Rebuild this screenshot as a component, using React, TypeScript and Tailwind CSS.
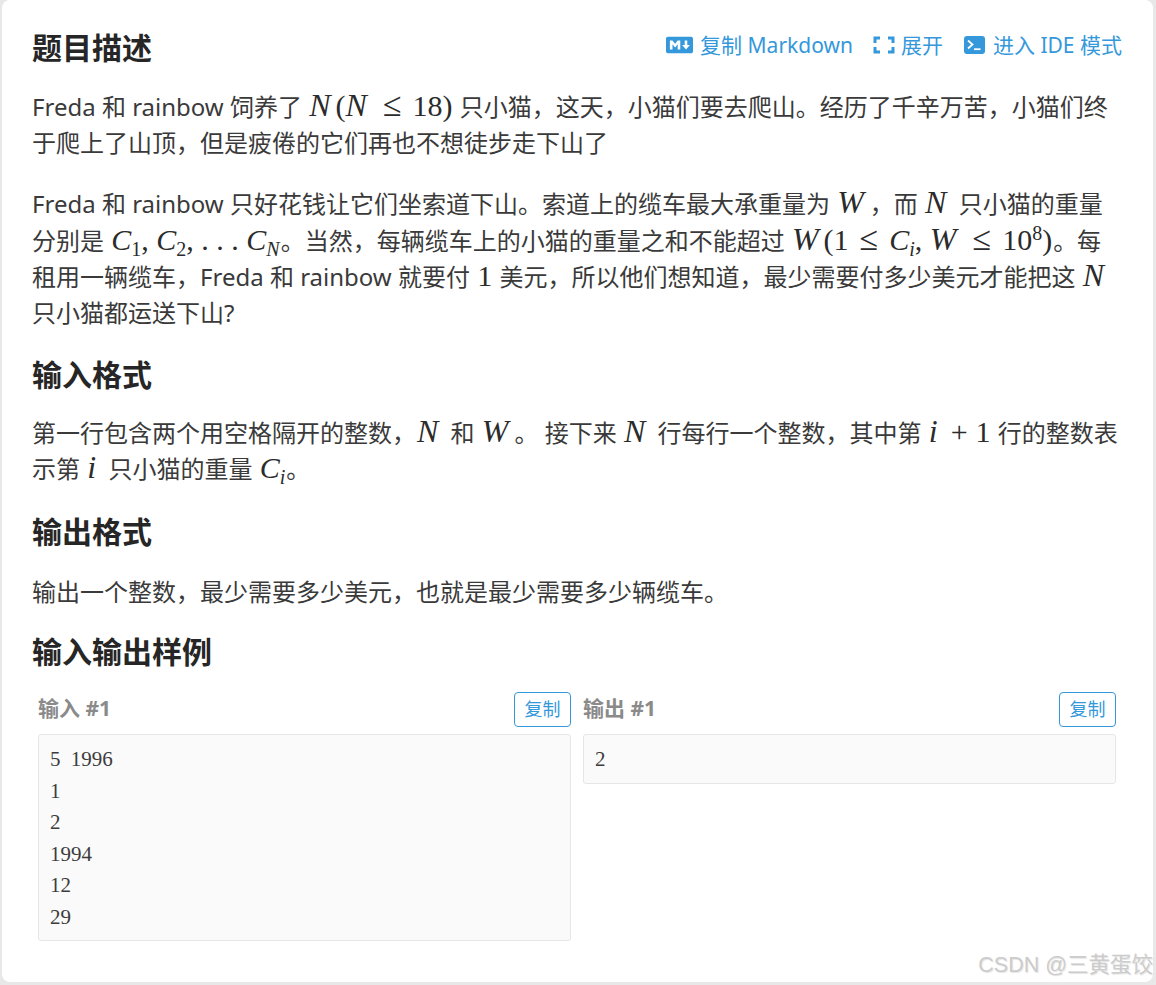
import React from "react";
import { FaMarkdown } from "react-icons/fa";

const M = ({ children }: { children: React.ReactNode }) => (
  <span className="font-['Liberation_Serif','DejaVu_Serif',serif] text-[30px] leading-none text-[#2b2b2b] px-[1px]">{children}</span>
);
const I = ({ children }: { children: React.ReactNode }) => <i className="text-[32px] pr-[5px]">{children}</i>;
const Op = ({ children }: { children: React.ReactNode }) => <span className="text-[34px] mx-[11px]">{children}</span>;
const Plus = ({ children }: { children: React.ReactNode }) => <span className="mx-[8px]">{children}</span>;
const Sub = ({ children }: { children: React.ReactNode }) => (
  <span className="text-[20px] leading-none align-[-6px]">{children}</span>
);
const Sup = ({ children }: { children: React.ReactNode }) => (
  <span className="text-[20px] leading-none align-[10px]">{children}</span>
);

const H = ({ children, className = "" }: { children: React.ReactNode; className?: string }) => (
  <h2 className={`text-[30px] leading-[40px] font-bold text-[#262626] ${className}`}>{children}</h2>
);

const P = ({ children, className = "" }: { children: React.ReactNode; className?: string }) => (
  <p className={`whitespace-nowrap h-auto [&_span]:leading-none [&_i]:leading-none ${className}`}>{children}</p>
);

const Sample = ({ label, lines }: { label: string; lines: string[] }) => (
  <div className="flex-1 min-w-0">
    <div className="flex items-center justify-between h-[36px]">
      <span className="text-[21px] font-bold text-[#8a8a8a] leading-[32px] mt-[-2px]">{label}</span>
      <button className="w-[57px] h-[35px] rounded-[4px] border border-[#3498db] text-[#3498db] text-[18px] leading-none bg-white">
        复制
      </button>
    </div>
    <div className="mt-[7px] min-h-[50px] rounded-[3px] border border-[#e6e6e6] bg-[#fafafa] px-[11px] pt-[9px] pb-[6px] font-['Liberation_Serif','Noto_Serif_CJK_SC',serif] text-[21px] [word-spacing:5px] leading-[31.6px] text-[#3c3c3c] whitespace-pre">
      {lines.map((l, i) => (
        <div key={i}>{l}</div>
      ))}
    </div>
  </div>
);

export default function App() {
  return (
    <div className="h-[985px] w-[1156px] bg-[#e8e8e8] pl-[2px] pr-[3px] pb-[3px] overflow-hidden font-['Noto_Sans','Noto_Sans_CJK_SC',sans-serif]">
      <div className="relative h-full bg-white rounded-[8px] pl-[30px] pr-[31px] pt-[28px] text-[#3a3a3a] text-[24px] leading-[36px]">
        <div className="flex items-center justify-between h-[40px]">
          <H>题目描述</H>
          <div className="flex items-center text-[#3498db] text-[21px] leading-[28px] mt-[-7px]">
            <span className="flex items-center">
              <FaMarkdown className="w-[27px] h-[22px] mr-[7px]" />
              复制 Markdown
            </span>
            <span className="flex items-center ml-[20px]">
              <svg viewBox="0 0 22 18" className="w-[22px] h-[18px] mr-[6px]" fill="none" stroke="currentColor" strokeWidth="3">
                <path d="M7 2H2V7M15 2H20V7M2 11V16H7M20 11V16H15" />
              </svg>
              展开
            </span>
            <span className="flex items-center ml-[21px]">
              <svg viewBox="0 0 21 18" className="w-[21px] h-[18px] mr-[8px]">
                <rect width="21" height="18" rx="3" fill="currentColor" />
                <path d="M4 4.5L8.5 8.5L4 12.5" fill="none" stroke="#fff" strokeWidth="1.8" />
                <path d="M10 13.2H16.5" fill="none" stroke="#fff" strokeWidth="1.8" />
              </svg>
              进入 IDE 模式
            </span>
          </div>
        </div>

        <P className="mt-[20px]">
          Freda 和 rainbow 饲养了 <M><I>N</I>(<I>N</I><Op>≤</Op>18)</M> 只小猫，这天，小猫们要去爬山。经历了千辛万苦，小猫们终
          <br />
          于爬上了山顶，但是疲倦的它们再也不想徒步走下山了
        </P>
        <P className="mt-[25px]">
          Freda 和 rainbow 只好花钱让它们坐索道下山。索道上的缆车最大承重量为 <M><I>W</I></M>，而 <M><I>N</I></M> 只小猫的重量
          <br />
          分别是 <M><i>C</i><Sub>1</Sub>, <i>C</i><Sub>2</Sub>, . . . <i>C</i><Sub><i>N</i></Sub></M>。当然，每辆缆车上的小猫的重量之和不能超过 <M><I>W</I>(1<Op>≤</Op><i>C</i><Sub><i>i</i></Sub>, <I>W</I><Op>≤</Op>10<Sup>8</Sup>)</M>。每
          <br />
          租用一辆缆车，Freda 和 rainbow 就要付 <M>1</M> 美元，所以他们想知道，最少需要付多少美元才能把这 <M><I>N</I></M>
          <br />
          只小猫都运送下山?
        </P>

        <H className="mt-[24px]">输入格式</H>
        <P className="mt-[20px]">
          第一行包含两个用空格隔开的整数，<M><I>N</I></M> 和 <M><I>W</I></M>。 接下来 <M><I>N</I></M> 行每行一个整数，其中第 <M><I>i</I><Plus>+</Plus>1</M> 行的整数表
          <br />
          示第 <M><I>i</I></M> 只小猫的重量 <M><i>C</i><Sub><i>i</i></Sub></M>。
        </P>

        <H className="mt-[25px]">输出格式</H>
        <P className="mt-[22px]">输出一个整数，最少需要多少美元，也就是最少需要多少辆缆车。</P>

        <H className="mt-[22px]">输入输出样例</H>
        <div className="flex items-start gap-[12px] mt-[19px] pl-[6px] pr-[6px]">
          <Sample label="输入 #1" lines={["5 1996", "1", "2", "1994", "12", "29"]} />
          <Sample label="输出 #1" lines={["2"]} />
        </div>

        <span className="absolute right-0 bottom-[2px] text-[21.5px] leading-[30px] text-[#cccccc] font-['Liberation_Sans','Noto_Sans_CJK_SC',sans-serif] [text-shadow:1px_1px_1px_#e4e4e4]">
          CSDN @三黄蛋饺
        </span>
      </div>
    </div>
  );
}
